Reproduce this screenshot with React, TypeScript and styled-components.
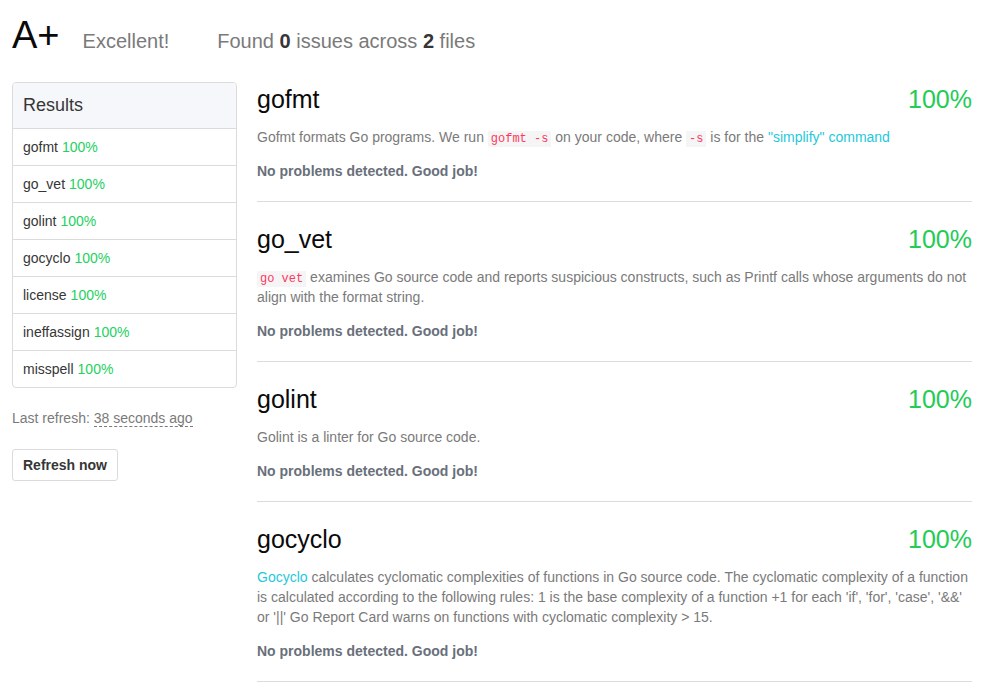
import React from 'react'
import styled, { createGlobalStyle } from 'styled-components'

const GlobalStyle = createGlobalStyle`
  body {
    margin: 0;
    background: #fff;
    font-family: 'Liberation Sans', Arial, sans-serif;
    color: #4a4a4a;
  }
`

type Check = {
  name: string
  desc: React.ReactNode
}

const results = ['gofmt', 'go_vet', 'golint', 'gocyclo', 'license', 'ineffassign', 'misspell']

function getChecks(): Check[] {
  return [
    {
      name: 'gofmt',
      desc: (
        <>
          Gofmt formats Go programs. We run <Code>gofmt -s</Code> on your code, where <Code>-s</Code> is for
          the <Link>"simplify" command</Link>
        </>
      ),
    },
    {
      name: 'go_vet',
      desc: (
        <>
          <Code>go vet</Code> examines Go source code and reports suspicious constructs, such as Printf calls
          whose arguments do not align with the format string.
        </>
      ),
    },
    {
      name: 'golint',
      desc: <>Golint is a linter for Go source code.</>,
    },
    {
      name: 'gocyclo',
      desc: (
        <>
          <Link>Gocyclo</Link> calculates cyclomatic complexities of functions in Go source code. The cyclomatic
          complexity of a function is calculated according to the following rules: 1 is the base complexity of a
          function +1 for each 'if', 'for', 'case', '&&' or '||' Go Report Card warns on functions with
          cyclomatic complexity &gt; 15.
        </>
      ),
    },
  ]
}

export default function App() {
  const checks = getChecks()
  return (
    <>
      <GlobalStyle />
      <Page>
        <Header>
          <Grade>A+</Grade>
          <Verdict>Excellent!</Verdict>
          <Summary>
            Found <strong>0</strong> issues across <strong>2</strong> files
          </Summary>
        </Header>
        <Columns>
          <Sidebar>
            <Panel>
              <PanelHeading>Results</PanelHeading>
              {results.map(r => (
                <PanelRow key={r}>
                  {r} <Score>100%</Score>
                </PanelRow>
              ))}
            </Panel>
            <LastRefresh>
              Last refresh: <Ago>38 seconds ago</Ago>
            </LastRefresh>
            <RefreshButton>Refresh now</RefreshButton>
          </Sidebar>
          <Main>
            {checks.map(c => (
              <Section key={c.name}>
                <TitleRow>
                  <Title>{c.name}</Title>
                  <Percent>100%</Percent>
                </TitleRow>
                <Desc>{c.desc}</Desc>
                <Ok>No problems detected. Good job!</Ok>
              </Section>
            ))}
          </Main>
        </Columns>
      </Page>
    </>
  )
}

const Page = styled.div`
  padding: 0 33px 0 12px;
`

const Header = styled.div`
  display: flex;
  align-items: baseline;
  height: 82px;
  padding-top: 14px;
  box-sizing: border-box;
`

const Grade = styled.span`
  font-size: 38px;
  color: #0a0a0a;
  margin-right: 23px;
`

const Verdict = styled.span`
  font-size: 20px;
  color: #7a7a7a;
  margin-right: 48px;
`

const Summary = styled.span`
  font-size: 20px;
  color: #7a7a7a;

  strong {
    color: #363636;
  }
`

const Columns = styled.div`
  display: flex;
  gap: 20px;
`

const Sidebar = styled.div`
  width: 225px;
  flex-shrink: 0;
`

const Panel = styled.div`
  border: 1px solid #dbdbdb;
  border-radius: 4px;
  overflow: hidden;
`

const PanelHeading = styled.div`
  background: #f5f7fa;
  height: 45px;
  display: flex;
  align-items: center;
  padding: 0 10px;
  font-size: 18px;
  color: #363636;
`

const PanelRow = styled.div`
  border-top: 1px solid #dbdbdb;
  height: 36px;
  display: flex;
  align-items: center;
  gap: 4px;
  padding: 0 10px;
  font-size: 14px;
  color: #363636;
`

const Score = styled.span`
  color: #23d160;
`

const LastRefresh = styled.div`
  margin-top: 22px;
  font-size: 14px;
  color: #7a7a7a;
`

const Ago = styled.span`
  border-bottom: 1px dashed #7a7a7a;
`

const RefreshButton = styled.button`
  margin-top: 23px;
  height: 32px;
  padding: 0 10px;
  background: #fff;
  border: 1px solid #dbdbdb;
  border-radius: 3px;
  font-family: inherit;
  font-size: 14px;
  font-weight: bold;
  color: #363636;
`

const Main = styled.div`
  flex: 1;
`

const Section = styled.div`
  border-bottom: 1px solid #dbdbdb;
  padding-bottom: 20px;
  margin-bottom: 20px;
`

const TitleRow = styled.div`
  display: flex;
  justify-content: space-between;
  align-items: center;
  height: 34px;
`

const Title = styled.h2`
  margin: 0;
  font-size: 25px;
  font-weight: normal;
  color: #0a0a0a;
`

const Percent = styled.span`
  font-size: 25px;
  color: #22cc55;
`

const Desc = styled.p`
  margin: 11px 0 0;
  font-size: 14px;
  line-height: 20px;
  color: #7a7a7a;
`

const Ok = styled.p`
  margin: 14px 0 0;
  font-size: 14px;
  line-height: 20px;
  font-weight: bold;
  color: #69707a;
`

const Code = styled.code`
  font-family: 'Liberation Mono', monospace;
  font-size: 12px;
  line-height: 1;
  color: #ff3860;
  background: #f5f5f5;
  padding: 1px 3px;
`

const Link = styled.a`
  color: #1fc8db;
  cursor: pointer;
`
